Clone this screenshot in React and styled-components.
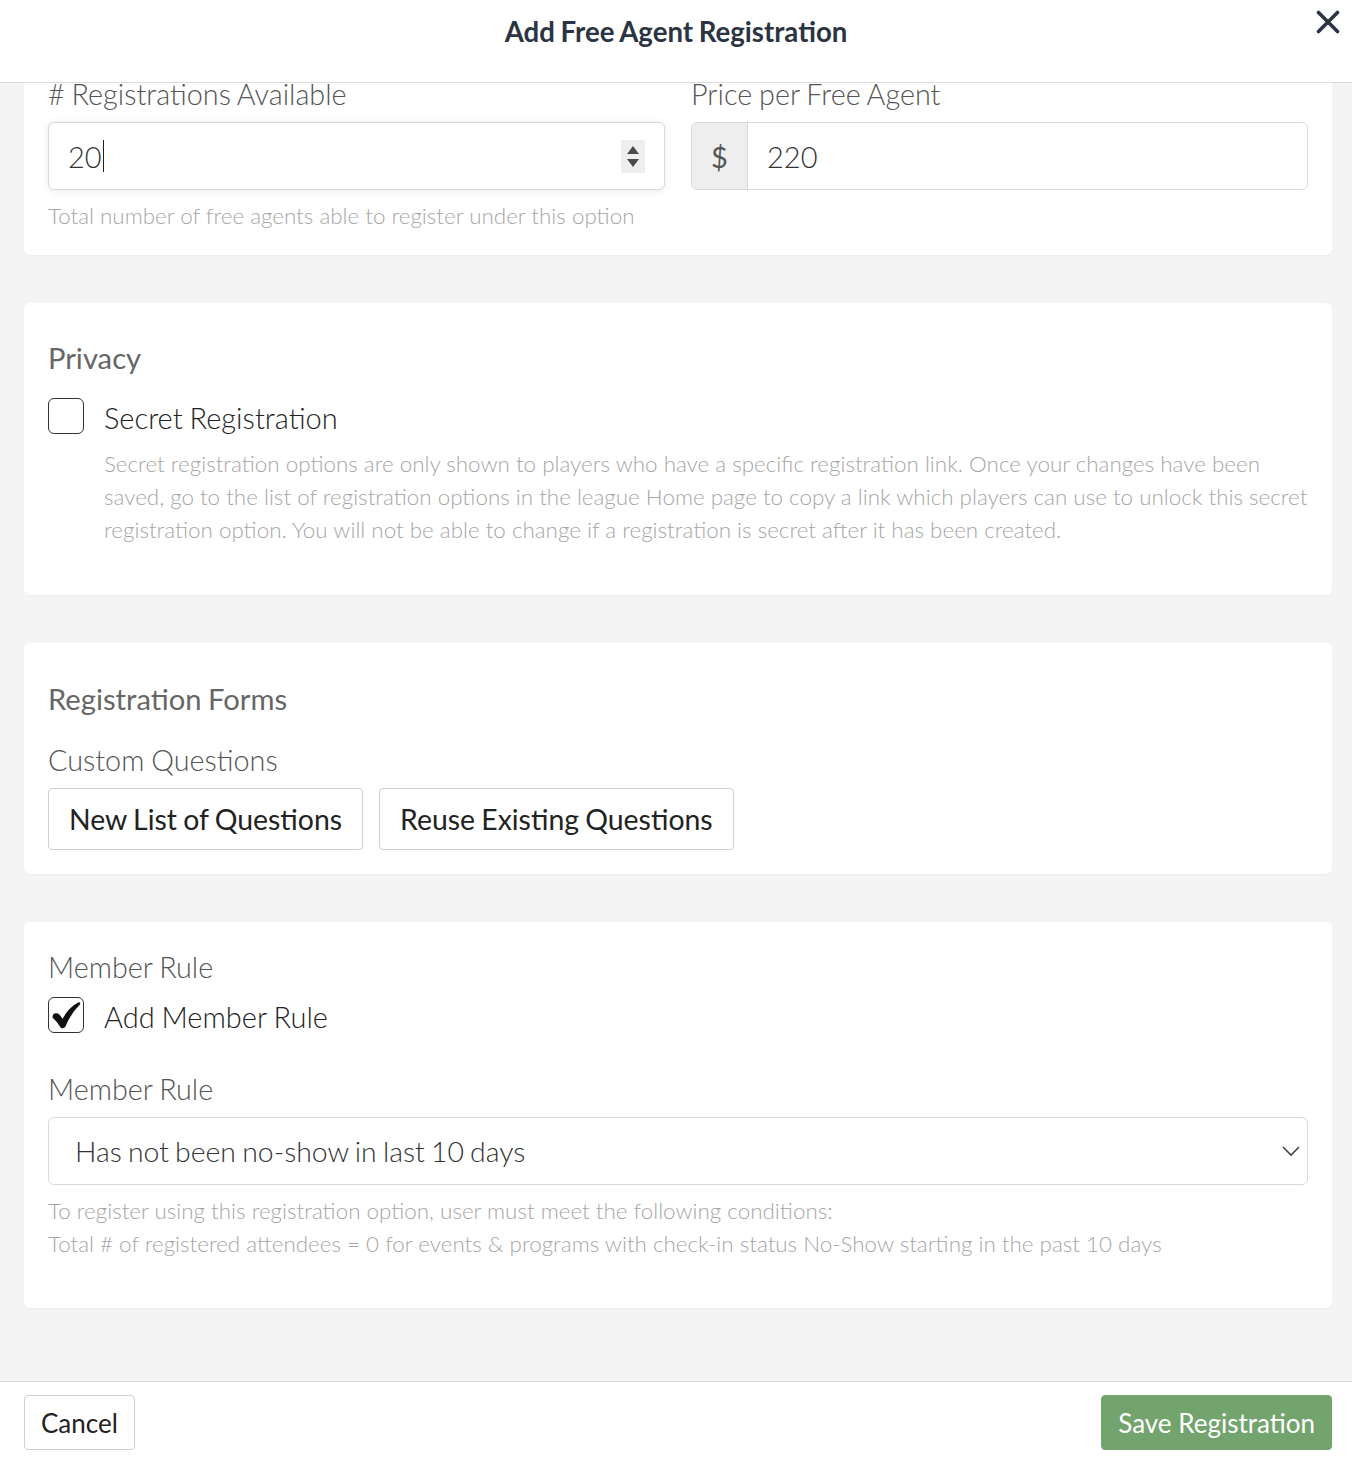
import React from "react";
import styled, { createGlobalStyle } from "styled-components";

const Global = createGlobalStyle`
  html, body { margin: 0; padding: 0; }
  body { font-family: Lato, "Open Sans", "Liberation Sans", sans-serif; }
  * { box-sizing: border-box; }
`;

const Page = styled.div`
  width: 1352px;
  height: 1462px;
  display: flex;
  flex-direction: column;
  background: #fff;
  overflow: hidden;
`;

const Header = styled.header`
  position: relative;
  height: 83px;
  flex: none;
  border-bottom: 1px solid #dcdcdc;
  display: flex;
  justify-content: center;
  align-items: flex-start;
  padding-top: 14px;
`;

const Title = styled.h1`
  margin: 0;
  font-size: 27.6px;
  line-height: 36px;
  font-weight: 700;
  color: #2b3442;
  word-spacing: -1px;
`;

const Close = styled.button`
  position: absolute;
  right: 12px;
  top: 10px;
  width: 24px;
  height: 24px;
  padding: 0;
  border: 0;
  background: none;
  cursor: pointer;
`;

const Body = styled.main`
  flex: 1;
  background: #f4f4f4;
  padding: 0 20px 0 24px;
  display: flex;
  flex-direction: column;
  gap: 48px;
  overflow: hidden;
`;

const Card = styled.section`
  background: #fff;
  border-radius: ${(p) => (p.$cut ? "0 0 6px 6px" : "6px")};
  padding: ${(p) => p.$pad};
  box-shadow: 0 1px 2px rgba(0, 0, 0, 0.03);
`;

const Row = styled.div`
  display: grid;
  grid-template-columns: 1fr 1fr;
  column-gap: 26px;
`;

const Field = styled.div`
  display: flex;
  flex-direction: column;
`;

const Label = styled.div`
  font-size: 28.8px;
  font-weight: 300;
  color: #555;
  word-spacing: -1px;
  line-height: ${(p) => p.$lh || "34px"};
  margin: ${(p) => p.$m || "0"};
`;

const Heading = styled.h2`
  margin: 0 0 ${(p) => p.$mb || "0"};
  font-size: 29.2px;
  line-height: 34px;
  font-weight: 400;
  color: #666;
  word-spacing: -1px;
`;

const InputBox = styled.div`
  height: 68px;
  border: 1px solid #d9d9d9;
  border-radius: 6px;
  background: #fff;
  display: flex;
  align-items: center;
  box-shadow: ${(p) => (p.$focus ? "0 1px 8px rgba(0,0,0,0.09)" : "none")};
  overflow: hidden;
`;

const InputValue = styled.div`
  flex: 1;
  padding-left: 19px;
  font-size: 29px;
  font-weight: 300;
  color: #333;
  display: flex;
  align-items: center;
`;

const Caret = styled.span`
  display: inline-block;
  width: 1.5px;
  height: 32px;
  background: #222;
  margin-left: 1px;
`;

const Spinner = styled.div`
  width: 24px;
  height: 33px;
  margin-right: 19px;
  background: #eeeeee;
  display: flex;
  flex-direction: column;
  align-items: center;
  justify-content: center;
  gap: 5px;
`;

const Addon = styled.div`
  width: 56px;
  align-self: stretch;
  background: #eeeeee;
  border-right: 1px solid #d9d9d9;
  display: flex;
  align-items: center;
  justify-content: center;
  font-size: 29px;
  font-weight: 400;
  color: #555;
`;

const Help = styled.p`
  margin: ${(p) => p.$m || "0"};
  font-size: 22.4px;
  line-height: 33px;
  font-weight: 300;
  color: #a6a6a6;
`;

const CheckRow = styled.label`
  display: flex;
  align-items: center;
  gap: 20px;
  margin: ${(p) => p.$m || "0"};
`;

const Box = styled.span`
  width: 36px;
  height: 36px;
  flex: none;
  border: 1.5px solid #333;
  border-radius: 6px;
  background: #fff;
  display: flex;
  align-items: center;
  justify-content: center;
`;

const CheckText = styled.span`
  font-size: 29px;
  font-weight: 300;
  color: #222;
  line-height: 34px;
  padding-top: 4px;
  word-spacing: -1px;
`;

const Indent = styled.div`
  padding-left: 56px;
`;

const BtnRow = styled.div`
  display: flex;
  gap: 16px;
`;

const Button = styled.button`
  height: ${(p) => p.$h || "62px"};
  padding: 0 ${(p) => p.$px || "20px"};
  border-radius: 4px;
  border: 1px solid ${(p) => (p.$primary ? "#74a46e" : "#cfcfcf")};
  background: ${(p) => (p.$primary ? "#74a46e" : "#fff")};
  color: ${(p) => (p.$primary ? "#fff" : "#222")};
  font-family: inherit;
  font-size: ${(p) => p.$fs || "28.4px"};
  font-weight: 400;
  word-spacing: ${(p) => (p.$fs ? "0" : "-1px")};
  cursor: pointer;
`;

const Select = styled.div`
  height: 68px;
  border: 1px solid #d9d9d9;
  border-radius: 6px;
  display: flex;
  align-items: center;
  justify-content: space-between;
  padding: 0 7px 0 26px;
  font-size: 28.4px;
  font-weight: 300;
  color: #333;
  word-spacing: -1.5px;
`;

const Footer = styled.footer`
  flex: none;
  height: 81px;
  border-top: 1px solid #dcdcdc;
  background: #fff;
  display: flex;
  justify-content: space-between;
  align-items: flex-start;
  padding: 13px 20px 0 24px;
`;

const Triangle = ({ up }) => (
  <svg width="12" height="8" viewBox="0 0 12 8">
    <path d={up ? "M6 0 L12 8 L0 8 Z" : "M0 0 L12 0 L6 8 Z"} fill="#4a4a4a" />
  </svg>
);

export default function App() {
  return (
    <>
      <Global />
      <Page>
        <Header>
          <Title>Add Free Agent Registration</Title>
          <Close aria-label="Close">
            <svg width="24" height="24" viewBox="0 0 24 24">
              <path d="M2.5 2.5 L21.5 21.5 M21.5 2.5 L2.5 21.5" stroke="#2b3442" strokeWidth="3.6" strokeLinecap="round" />
            </svg>
          </Close>
        </Header>
        <Body>
          <Card $cut $pad="0 24px 23px 24px">
            <Row>
              <Field>
                <Label $lh="22px" $m="0 0 17px">
                  # Registrations Available
                </Label>
                <InputBox $focus>
                  <InputValue>
                    20<Caret />
                  </InputValue>
                  <Spinner>
                    <Triangle up />
                    <Triangle />
                  </Spinner>
                </InputBox>
                <Help $m="9px 0 0">Total number of free agents able to register under this option</Help>
              </Field>
              <Field>
                <Label $lh="22px" $m="0 0 17px">
                  Price per Free Agent
                </Label>
                <InputBox>
                  <Addon>$</Addon>
                  <InputValue>220</InputValue>
                </InputBox>
              </Field>
            </Row>
          </Card>

          <Card $pad="38px 24px 49px">
            <Heading $mb="22px">Privacy</Heading>
            <CheckRow>
              <Box />
              <CheckText>Secret Registration</CheckText>
            </CheckRow>
            <Indent>
              <Help $m="12px 0 0">
                Secret registration options are only shown to players who have a specific registration link. Once your
                changes have been saved, go to the list of registration options in the league Home page to copy a link
                which players can use to unlock this secret registration option. You will not be able to change if a
                registration is secret after it has been created.
              </Help>
            </Indent>
          </Card>

          <Card $pad="39px 24px 24px">
            <Heading $mb="27px">Registration Forms</Heading>
            <Label $m="0 0 11px">Custom Questions</Label>
            <BtnRow>
              <Button>New List of Questions</Button>
              <Button>Reuse Existing Questions</Button>
            </BtnRow>
          </Card>

          <Card $pad="28px 24px 48px">
            <Label $m="0 0 12px">Member Rule</Label>
            <CheckRow>
              <Box>
                <svg width="30" height="28" viewBox="0 0 30 28">
                  <path
                    d="M1.5 16.5 Q1.5 11 7 12.5 Q9 13.5 11.5 18 Q17 7 27 1.5 Q30 0.5 29 3.5 Q20 12 14.5 25.5 Q13 28 10 27 Q6.5 21 1.5 16.5 Z"
                    fill="#111"
                  />
                </svg>
              </Box>
              <CheckText>Add Member Rule</CheckText>
            </CheckRow>
            <Label $m="38px 0 11px">Member Rule</Label>
            <Select>
              <span>Has not been no-show in last 10 days</span>
              <svg width="18" height="12" viewBox="0 0 18 12">
                <path d="M1 2 L9 10 L17 2" fill="none" stroke="#444" strokeWidth="1.6" />
              </svg>
            </Select>
            <Help $m="9px 0 0">
              To register using this registration option, user must meet the following conditions:
              <br />
              Total # of registered attendees = 0 for events &amp; programs with check-in status No-Show starting in the
              past 10 days
            </Help>
          </Card>
        </Body>
        <Footer>
          <Button $h="55px" $px="16px" $fs="26px">
            Cancel
          </Button>
          <Button $primary $h="55px" $px="16px" $fs="26px">
            Save Registration
          </Button>
        </Footer>
      </Page>
    </>
  );
}
